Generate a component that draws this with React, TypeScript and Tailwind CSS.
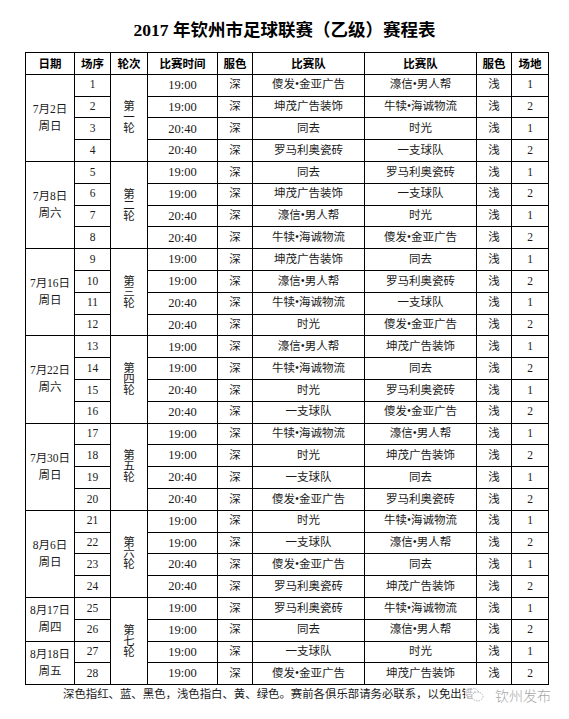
import React from "react"

type Match = [number, string, string, string, number]

interface Group {
    dates: { date: string; day: string; span: number }[]
    round: string
    matches: Match[]
}

const groups: Group[] = [
    {
        dates: [{ date: "7月2日", day: "周日", span: 4 }],
        round: "一",
        matches: [
            [1, "19:00", "傻发•金亚广告", "濠信•男人帮", 1],
            [2, "19:00", "坤茂广告装饰", "牛犊•海诚物流", 2],
            [3, "20:40", "同去", "时光", 1],
            [4, "20:40", "罗马利奥瓷砖", "一支球队", 2],
        ],
    },
    {
        dates: [{ date: "7月8日", day: "周六", span: 4 }],
        round: "二",
        matches: [
            [5, "19:00", "同去", "罗马利奥瓷砖", 1],
            [6, "19:00", "坤茂广告装饰", "一支球队", 2],
            [7, "20:40", "濠信•男人帮", "时光", 1],
            [8, "20:40", "牛犊•海诚物流", "傻发•金亚广告", 2],
        ],
    },
    {
        dates: [{ date: "7月16日", day: "周日", span: 4 }],
        round: "三",
        matches: [
            [9, "19:00", "坤茂广告装饰", "同去", 1],
            [10, "19:00", "濠信•男人帮", "罗马利奥瓷砖", 2],
            [11, "20:40", "牛犊•海诚物流", "一支球队", 1],
            [12, "20:40", "时光", "傻发•金亚广告", 2],
        ],
    },
    {
        dates: [{ date: "7月22日", day: "周六", span: 4 }],
        round: "四",
        matches: [
            [13, "19:00", "濠信•男人帮", "坤茂广告装饰", 1],
            [14, "19:00", "牛犊•海诚物流", "同去", 2],
            [15, "20:40", "时光", "罗马利奥瓷砖", 1],
            [16, "20:40", "一支球队", "傻发•金亚广告", 2],
        ],
    },
    {
        dates: [{ date: "7月30日", day: "周日", span: 4 }],
        round: "五",
        matches: [
            [17, "19:00", "牛犊•海诚物流", "濠信•男人帮", 1],
            [18, "19:00", "时光", "坤茂广告装饰", 2],
            [19, "20:40", "一支球队", "同去", 1],
            [20, "20:40", "傻发•金亚广告", "罗马利奥瓷砖", 2],
        ],
    },
    {
        dates: [{ date: "8月6日", day: "周日", span: 4 }],
        round: "六",
        matches: [
            [21, "19:00", "时光", "牛犊•海诚物流", 1],
            [22, "19:00", "一支球队", "濠信•男人帮", 2],
            [23, "20:40", "傻发•金亚广告", "同去", 1],
            [24, "20:40", "罗马利奥瓷砖", "坤茂广告装饰", 2],
        ],
    },
    {
        dates: [
            { date: "8月17日", day: "周四", span: 2 },
            { date: "8月18日", day: "周五", span: 2 },
        ],
        round: "七",
        matches: [
            [25, "19:00", "罗马利奥瓷砖", "牛犊•海诚物流", 1],
            [26, "19:00", "同去", "濠信•男人帮", 2],
            [27, "19:00", "一支球队", "时光", 1],
            [28, "19:00", "傻发•金亚广告", "坤茂广告装饰", 2],
        ],
    },
]

const headers = ["日期", "场序", "轮次", "比赛时间", "服色", "比赛队", "比赛队", "服色", "场地"]
const widths = [49, 36, 37, 70, 35, 112, 112, 35, 37]

const td = "border border-black p-0 h-[21.8px] text-center align-middle"

function WechatMark() {
    return (
        <svg width="20" height="16" viewBox="0 0 20 16" fill="none" stroke="#b5b5b5" strokeWidth="1" strokeDasharray="1.5 1">
            <ellipse cx="7.5" cy="6.5" rx="6.5" ry="5.2" />
            <ellipse cx="12.5" cy="9.5" rx="5.5" ry="4.4" fill="white" />
            <circle cx="5.2" cy="5" r="0.7" fill="#b5b5b5" stroke="none" />
            <circle cx="9.6" cy="5" r="0.7" fill="#b5b5b5" stroke="none" />
        </svg>
    )
}

export default function App() {
    return (
        <div className="w-[569px] h-[719px] bg-white overflow-hidden text-[#1a1a1a] font-['Liberation_Serif','Noto_Sans_CJK_SC',serif]">
            <h1 className="pt-[20px] mb-[6px] h-[46px] text-center text-[17.5px] leading-[20px] font-bold text-black">
                2017 年钦州市足球联赛（乙级）赛程表
            </h1>
            <table className="ml-[25px] table-fixed border-collapse w-[523px] text-[11.5px] leading-none">
                <colgroup>
                    {widths.map((w, i) => (
                        <col key={i} style={{ width: w }} />
                    ))}
                </colgroup>
                <thead>
                    <tr>
                        {headers.map((h, i) => (
                            <th key={i} className={`${td} font-bold text-black text-[11.5px] font-['Noto_Sans_CJK_SC',sans-serif]`}>
                                {h}
                            </th>
                        ))}
                    </tr>
                </thead>
                <tbody>
                    {groups.map((g) => {
                        let dateIdx = 0
                        let covered = 0
                        return g.matches.map((m, i) => {
                            let dateCell = null
                            if (i === covered) {
                                const d = g.dates[dateIdx]
                                dateCell = (
                                    <td rowSpan={d.span} className={`${td} leading-[17px]`}>
                                        <div>{d.date}</div>
                                        <div>{d.day}</div>
                                    </td>
                                )
                                covered += d.span
                                dateIdx += 1
                            }
                            return (
                                <tr key={m[0]}>
                                    {dateCell}
                                    <td className={td}>{m[0]}</td>
                                    {i === 0 && (
                                        <td rowSpan={4} className={`${td} leading-[11px]`}>
                                            <div>第</div>
                                            <div>{g.round}</div>
                                            <div>轮</div>
                                        </td>
                                    )}
                                    <td className={`${td} text-[12.5px]`}>{m[1]}</td>
                                    <td className={td}>深</td>
                                    <td className={td}>{m[2]}</td>
                                    <td className={td}>{m[3]}</td>
                                    <td className={td}>浅</td>
                                    <td className={td}>{m[4]}</td>
                                </tr>
                            )
                        })
                    })}
                </tbody>
            </table>
            <div className="mt-[2px] ml-[63px] flex items-center h-[16px]">
                <span className="text-[11.4px] leading-none">
                    深色指红、蓝、黑色，浅色指白、黄、绿色。赛前各俱乐部请务必联系，以免出错
                </span>
                <span className="-ml-[8px] flex items-center gap-[10px] bg-white/70">
                    <WechatMark />
                    <span className="text-[14px] leading-none text-[#a8a8a8] font-light font-['Noto_Sans_CJK_SC',sans-serif]">
                        钦州发布
                    </span>
                </span>
            </div>
        </div>
    )
}
